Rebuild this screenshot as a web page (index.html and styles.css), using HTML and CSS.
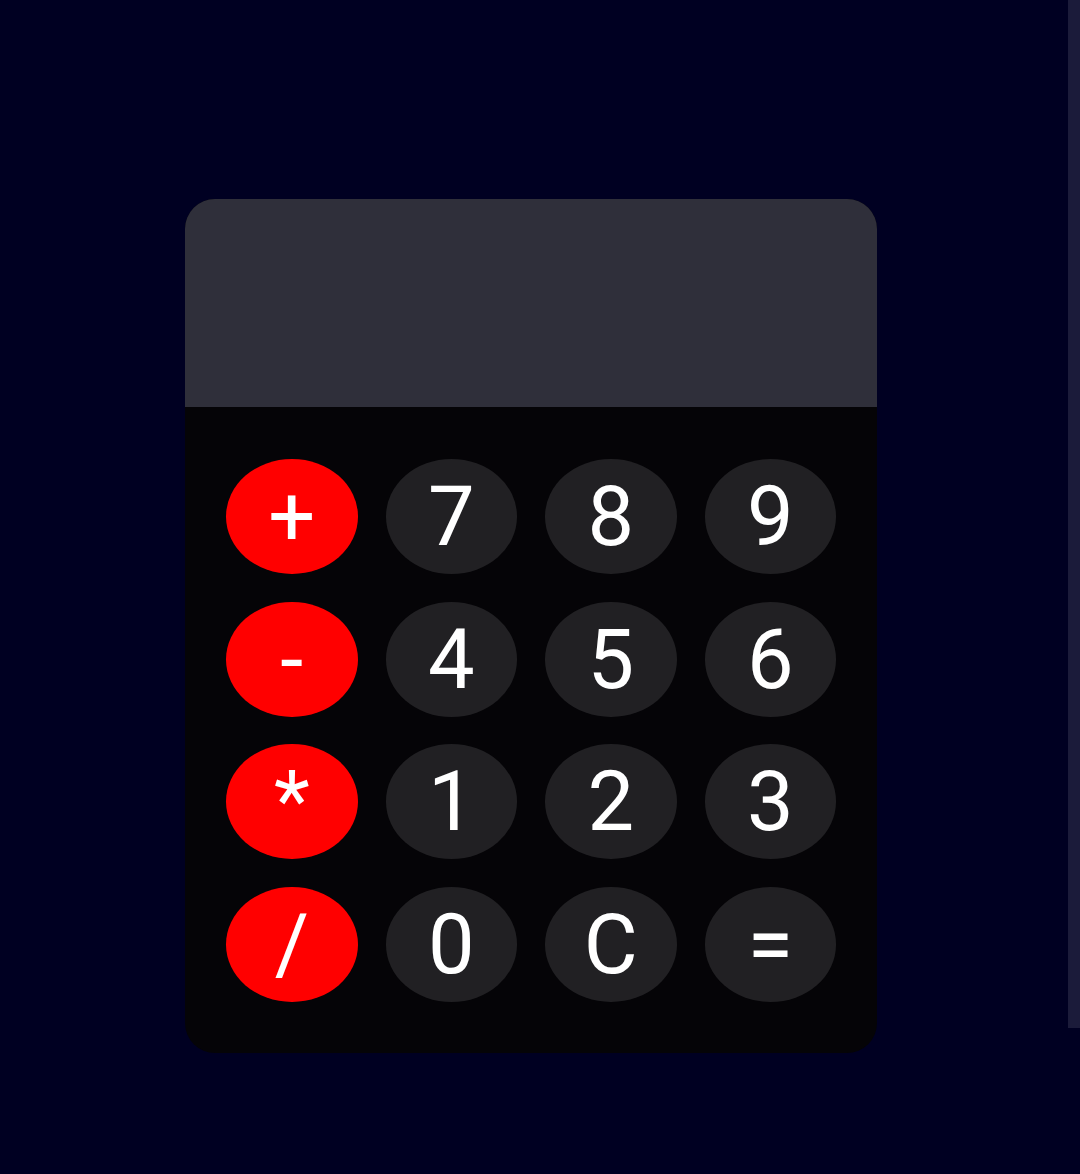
FILE: index.html
```html
<!DOCTYPE html>
<html lang="en">
<head>
<meta charset="utf-8">
<title>Calculator</title>
<link rel="stylesheet" href="styles.css">
</head>
<body>
<div class="page">
  <main class="main">
    <div class="calculator">
      <div class="display"></div>
      <div class="keypad">
        <button class="key op">+</button>
        <button class="key">7</button>
        <button class="key">8</button>
        <button class="key">9</button>
        <button class="key op">-</button>
        <button class="key">4</button>
        <button class="key">5</button>
        <button class="key">6</button>
        <button class="key op">*</button>
        <button class="key">1</button>
        <button class="key">2</button>
        <button class="key">3</button>
        <button class="key op">/</button>
        <button class="key">0</button>
        <button class="key">C</button>
        <button class="key">=</button>
      </div>
    </div>
  </main>
  <div class="scrollbar"></div>
</div>
</body>
</html>
```
FILE: styles.css
```css
html, body {
  margin: 0;
  padding: 0;
  background: #000022;
  height: 100%;
  overflow: hidden;
}

.page {
  display: flex;
  align-items: flex-start;
  width: 1080px;
  height: 1174px;
}

.main {
  flex: 1;
}

.scrollbar {
  width: 12px;
  height: 1028px;
  background: #1b1b3a;
}

.calculator {
  width: 692px;
  margin: 199px 0 0 185px;
  border-radius: 30px;
  overflow: hidden;
  background: #050407;
}

.display {
  height: 208px;
  background: #2f2f3a;
}

.keypad {
  display: grid;
  grid-template-columns: repeat(4, 1fr);
  column-gap: 28px;
  row-gap: 27.5px;
  padding: 52px 41px 51px 41px;
}

.key {
  height: 115px;
  border: none;
  border-radius: 50%;
  background: #212023;
  color: #ffffff;
  font-family: Roboto, "Liberation Sans", sans-serif;
  font-size: 83px;
  font-weight: 400;
  line-height: 1;
  padding: 0;
  display: flex;
  align-items: center;
  justify-content: center;
}

.key.op {
  background: #ff0000;
}
```
